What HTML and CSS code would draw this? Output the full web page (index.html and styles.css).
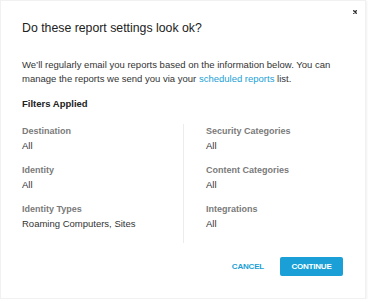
FILE: index.html
```html
<!DOCTYPE html>
<html>
<head>
<meta charset="utf-8">
<link rel="stylesheet" href="styles.css">
</head>
<body>
<div class="dialog">
  <button class="close" aria-label="Close"><svg width="4" height="4" viewBox="0 0 4 4"><path d="M0.3 0.3 L3.7 3.7 M3.7 0.3 L0.3 3.7" stroke="#2a2a2a" stroke-width="1.3" fill="none"/></svg></button>
  <h1 class="title">Do these report settings look ok?</h1>
  <p class="intro">We’ll regularly email you reports based on the information below. You can manage the reports we send you via your <a class="link" href="#">scheduled reports</a> list.</p>
  <h2 class="section">Filters Applied</h2>
  <div class="filters">
    <div class="col col-left">
      <div class="item"><div class="label">Destination</div><div class="value">All</div></div>
      <div class="item"><div class="label">Identity</div><div class="value">All</div></div>
      <div class="item"><div class="label">Identity Types</div><div class="value">Roaming Computers, Sites</div></div>
    </div>
    <div class="col col-right">
      <div class="item"><div class="label">Security Categories</div><div class="value">All</div></div>
      <div class="item"><div class="label">Content Categories</div><div class="value">All</div></div>
      <div class="item"><div class="label">Integrations</div><div class="value">All</div></div>
    </div>
  </div>
  <div class="actions">
    <button class="btn btn-cancel">CANCEL</button>
    <button class="btn btn-continue">CONTINUE</button>
  </div>
</div>
</body>
</html>
```

FILE: styles.css
```css
html, body {
  margin: 0;
  padding: 0;
  background: #ffffff;
}
body {
  font-family: "Liberation Sans", Arial, sans-serif;
  color: #333333;
}
.dialog {
  position: relative;
  box-sizing: border-box;
  width: 366px;
  height: 299px;
  border: 1px solid #f1f1f1;
  box-shadow: 1px 1px 2px rgba(0,0,0,0.06);
  padding: 18px 22px 0 21px;
  background: #fff;
}
.close {
  position: absolute;
  top: 9px;
  right: 8px;
  width: 4px;
  height: 4px;
  border: 0;
  background: none;
  padding: 0;
  display: block;
  cursor: pointer;
}
.close svg {
  display: block;
}
.title {
  margin: 0;
  font-size: 12.3px;
  font-weight: normal;
  line-height: 18px;
  color: #222;
}
.intro {
  margin: 21px 0 0;
  font-size: 9.5px;
  line-height: 14px;
  color: #333;
}
.link {
  color: #1a9fd6;
  text-decoration: none;
}
.section {
  margin: 12px 0 0;
  font-size: 9.5px;
  font-weight: bold;
  line-height: 12px;
  color: #222;
}
.filters {
  display: flex;
  margin-top: 14px;
}
.col {
  display: flex;
  flex-direction: column;
  gap: 10px;
  padding-bottom: 12px;
}
.col-left {
  width: 161px;
  border-right: 1px solid #ececec;
}
.col-right {
  padding-left: 22px;
}
.label {
  font-size: 9px;
  font-weight: bold;
  line-height: 14px;
  color: #7a7a7a;
}
.value {
  font-size: 9.5px;
  line-height: 15px;
  color: #333;
}
.actions {
  display: flex;
  justify-content: flex-end;
  align-items: center;
  gap: 16px;
  margin-top: 14px;
}
.btn {
  font-family: "Liberation Sans", Arial, sans-serif;
  font-size: 8px;
  font-weight: bold;
  letter-spacing: -0.2px;
  border: 0;
  cursor: pointer;
}
.btn-cancel {
  background: none;
  color: #1a9fd6;
  padding: 0;
}
.btn-continue {
  background: #1a9fd6;
  color: #fff;
  width: 63px;
  height: 19px;
  border-radius: 2px;
  padding: 0;
}
```
